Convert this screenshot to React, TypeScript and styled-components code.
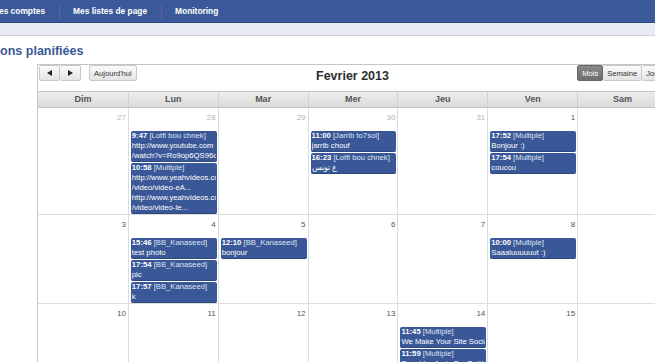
import React from 'react';
import styled, { createGlobalStyle } from 'styled-components';

/**
 * Scheduled publications page: top navigation and a month calendar.
 */
const GlobalStyle = createGlobalStyle`
	html, body {
		margin: 0;
		padding: 0;
		background: #fff;
		overflow: hidden;
	}
	body {
		font-family: "Liberation Sans", Arial, sans-serif;
	}
	#root {
		width: 655px;
		height: 362px;
		overflow: hidden;
	}
`;

const TopBar = styled.nav`
	height: 22px;
	background: #3b5998;
	border-bottom: 1px solid #30497f;
	display: flex;
	align-items: center;
`;

const NavList = styled.ul`
	display: flex;
	align-items: center;
	margin: 0 0 0 -21px;
	padding: 0;
	list-style: none;
`;

const NavItem = styled.li`
	height: 17px;
	display: flex;
	align-items: center;
	padding: 0 14px 0 13px;
	color: #fff;
	font-weight: bold;
	font-size: 8.4px;
	white-space: nowrap;
	& + & {
		border-left: 1px solid #4d69a5;
	}
`;

const SubBar = styled.div`
	height: 12px;
	background: #e8ebf2;
	border-bottom: 1px solid #cfd4df;
`;

const Main = styled.main`
	display: flex;
	flex-direction: column;
`;

const PageTitle = styled.h1`
	margin: 8px 0 0 -52px;
	font-size: 12.5px;
	line-height: 15px;
	font-weight: bold;
	color: #3b5998;
	white-space: nowrap;
`;

const Calendar = styled.section`
	margin: 5px 0 0 37px;
	width: 629px;
	flex-shrink: 0;
	border: 1px solid #c6c6c6;
	border-bottom: none;
	background: #fff;
`;

const Toolbar = styled.div`
	height: 26px;
	padding: 0 1px;
	display: grid;
	grid-template-columns: 1fr auto 1fr;
	align-items: start;
`;

const ButtonGroup = styled.div<{ $end?: boolean }>`
	display: flex;
	gap: 8px;
	justify-content: ${(props) => (props.$end ? 'flex-end' : 'flex-start')};
`;

const Joined = styled.div`
	display: flex;
`;

const Button = styled.button<{ $active?: boolean; $w?: number }>`
	height: 16px;
	${(props) => (props.$w ? `width: ${props.$w}px;` : '')}
	padding: 0 4px;
	margin: 0;
	display: flex;
	align-items: center;
	justify-content: center;
	font-family: "Liberation Sans", Arial, sans-serif;
	font-size: 7.6px;
	color: ${(props) => (props.$active ? '#fff' : '#333')};
	background: ${(props) => (props.$active
		? 'linear-gradient(#888, #6e6e6e)'
		: 'linear-gradient(#fbfbfb, #e4e4e4)')};
	border: 1px solid ${(props) => (props.$active ? '#666' : '#c8c8c8')};
	border-radius: 2px;
	& + & {
		border-left: none;
	}
`;

const Arrow = styled.span<{ $dir: 'left' | 'right' }>`
	width: 0;
	height: 0;
	border-top: 3px solid transparent;
	border-bottom: 3px solid transparent;
	${(props) => (props.$dir === 'left'
		? 'border-right: 5px solid #222;'
		: 'border-left: 5px solid #222;')}
`;

const MonthTitle = styled.h2`
	margin: 3px 0 0;
	font-size: 12.5px;
	line-height: 16px;
	font-weight: bold;
	color: #2d2d2d;
`;

const Grid = styled.div`
	display: grid;
	grid-template-columns: repeat(7, 1fr);
`;

const HeadRow = styled(Grid)`
	border-top: 1px solid #c6c6c6;
	border-bottom: 1px solid #c6c6c6;
	background: linear-gradient(#ededed, #dadada);
`;

const HeadCell = styled.div`
	height: 15px;
	line-height: 15px;
	text-align: center;
	font-size: 9px;
	font-weight: bold;
	color: #555;
	& + & {
		border-left: 1px solid #cfcfcf;
	}
`;

const WeekRow = styled(Grid)`
	border-bottom: 1px solid #dcdcdc;
`;

const DayCell = styled.div`
	min-width: 0;
	display: flex;
	flex-direction: column;
	gap: 1px;
	& + & {
		border-left: 1px solid #dcdcdc;
	}
`;

const DayNum = styled.div<{ $other?: boolean }>`
	height: 10px;
	padding: 5px 2px 7px 0;
	text-align: right;
	font-size: 8px;
	line-height: 10px;
	color: ${(props) => (props.$other ? '#b4b4b4' : '#555')};
`;

const EventBox = styled.div`
	margin: 0 1px 0 2px;
	padding: 0 1px;
	background: #3a5897;
	border-bottom: 1px solid #2c4880;
	border-radius: 2px;
	color: #fff;
	font-size: 7.7px;
	line-height: 10px;
	overflow: hidden;
`;

const EventLine = styled.div`
	white-space: nowrap;
	overflow: hidden;
`;

const Time = styled.b`
	font-weight: bold;
`;

const Author = styled.span`
	color: #dfe5f1;
`;

type CalEvent = { time: string; author: string; lines: string[] };
type Day = { n: number; other?: boolean; events?: CalEvent[] };

const days = ['Dim', 'Lun', 'Mar', 'Mer', 'Jeu', 'Ven', 'Sam'];

const weeks: Day[][] = [
	[
		{ n: 27, other: true },
		{
			n: 28,
			other: true,
			events: [
				{ time: '9:47', author: 'Lotfi bou chnek', lines: ['http://www.youtube.com', '/watch?v=Ro9op6QS96o'] },
				{ time: '10:58', author: 'Multiple', lines: ['http://www.yeahvideos.com', '/video/video-eA...', 'http://www.yeahvideos.com', '/video/video-le...'] },
			],
		},
		{ n: 29, other: true },
		{
			n: 30,
			other: true,
			events: [
				{ time: '11:00', author: 'Jarrib to7sol', lines: ['jarrib chouf'] },
				{ time: '16:23', author: 'Lotfi bou chnek', lines: ['ع تونس'] },
			],
		},
		{ n: 31, other: true },
		{
			n: 1,
			events: [
				{ time: '17:52', author: 'Multiple', lines: ['Bonjour :)'] },
				{ time: '17:54', author: 'Multiple', lines: ['coucou'] },
			],
		},
		{ n: 2 },
	],
	[
		{ n: 3 },
		{
			n: 4,
			events: [
				{ time: '15:46', author: 'BB_Kanaseed', lines: ['test photo'] },
				{ time: '17:54', author: 'BB_Kanaseed', lines: ['pic'] },
				{ time: '17:57', author: 'BB_Kanaseed', lines: ['k'] },
			],
		},
		{ n: 5, events: [{ time: '12:10', author: 'BB_Kanaseed', lines: ['bonjour'] }] },
		{ n: 6 },
		{ n: 7 },
		{ n: 8, events: [{ time: '10:00', author: 'Multiple', lines: ['Saaaluuuuuut :)'] }] },
		{ n: 9 },
	],
	[
		{ n: 10 },
		{ n: 11 },
		{ n: 12 },
		{ n: 13 },
		{
			n: 14,
			events: [
				{ time: '11:45', author: 'Multiple', lines: ['We Make Your Site Social'] },
				{ time: '11:59', author: 'Multiple', lines: ['Pour Vos Amis Sur Twitter'] },
			],
		},
		{ n: 15 },
		{ n: 16 },
	],
];

function App(): JSX.Element {
	return (
		<>
			<GlobalStyle />
			<TopBar>
				<NavList>
					<NavItem>Mes comptes</NavItem>
					<NavItem>Mes listes de page</NavItem>
					<NavItem>Monitoring</NavItem>
				</NavList>
			</TopBar>
			<SubBar />
			<Main>
				<PageTitle>Publications planifiées</PageTitle>
				<Calendar>
					<Toolbar>
						<ButtonGroup>
							<Joined>
								<Button $w={21} aria-label="Précédent"><Arrow $dir="left" /></Button>
								<Button $w={21} aria-label="Suivant"><Arrow $dir="right" /></Button>
							</Joined>
							<Button>Aujourd&apos;hui</Button>
						</ButtonGroup>
						<MonthTitle>Fevrier 2013</MonthTitle>
						<ButtonGroup $end>
							<Joined>
								<Button $active>Mois</Button>
								<Button>Semaine</Button>
								<Button>Jour</Button>
							</Joined>
						</ButtonGroup>
					</Toolbar>
					<HeadRow>
						{days.map((d) => <HeadCell key={d}>{d}</HeadCell>)}
					</HeadRow>
					{weeks.map((week) => (
						<WeekRow key={week[0].n}>
							{week.map((day) => (
								<DayCell key={day.n}>
									<DayNum $other={day.other}>{day.n}</DayNum>
									{day.events?.map((ev) => (
										<EventBox key={ev.time}>
											<EventLine>
												<Time>{ev.time}</Time>
												{' '}
												<Author>[{ev.author}]</Author>
											</EventLine>
											{ev.lines.map((l, i) => <EventLine key={i}>{l}</EventLine>)}
										</EventBox>
									))}
								</DayCell>
							))}
						</WeekRow>
					))}
				</Calendar>
			</Main>
		</>
	);
}

export default App;
